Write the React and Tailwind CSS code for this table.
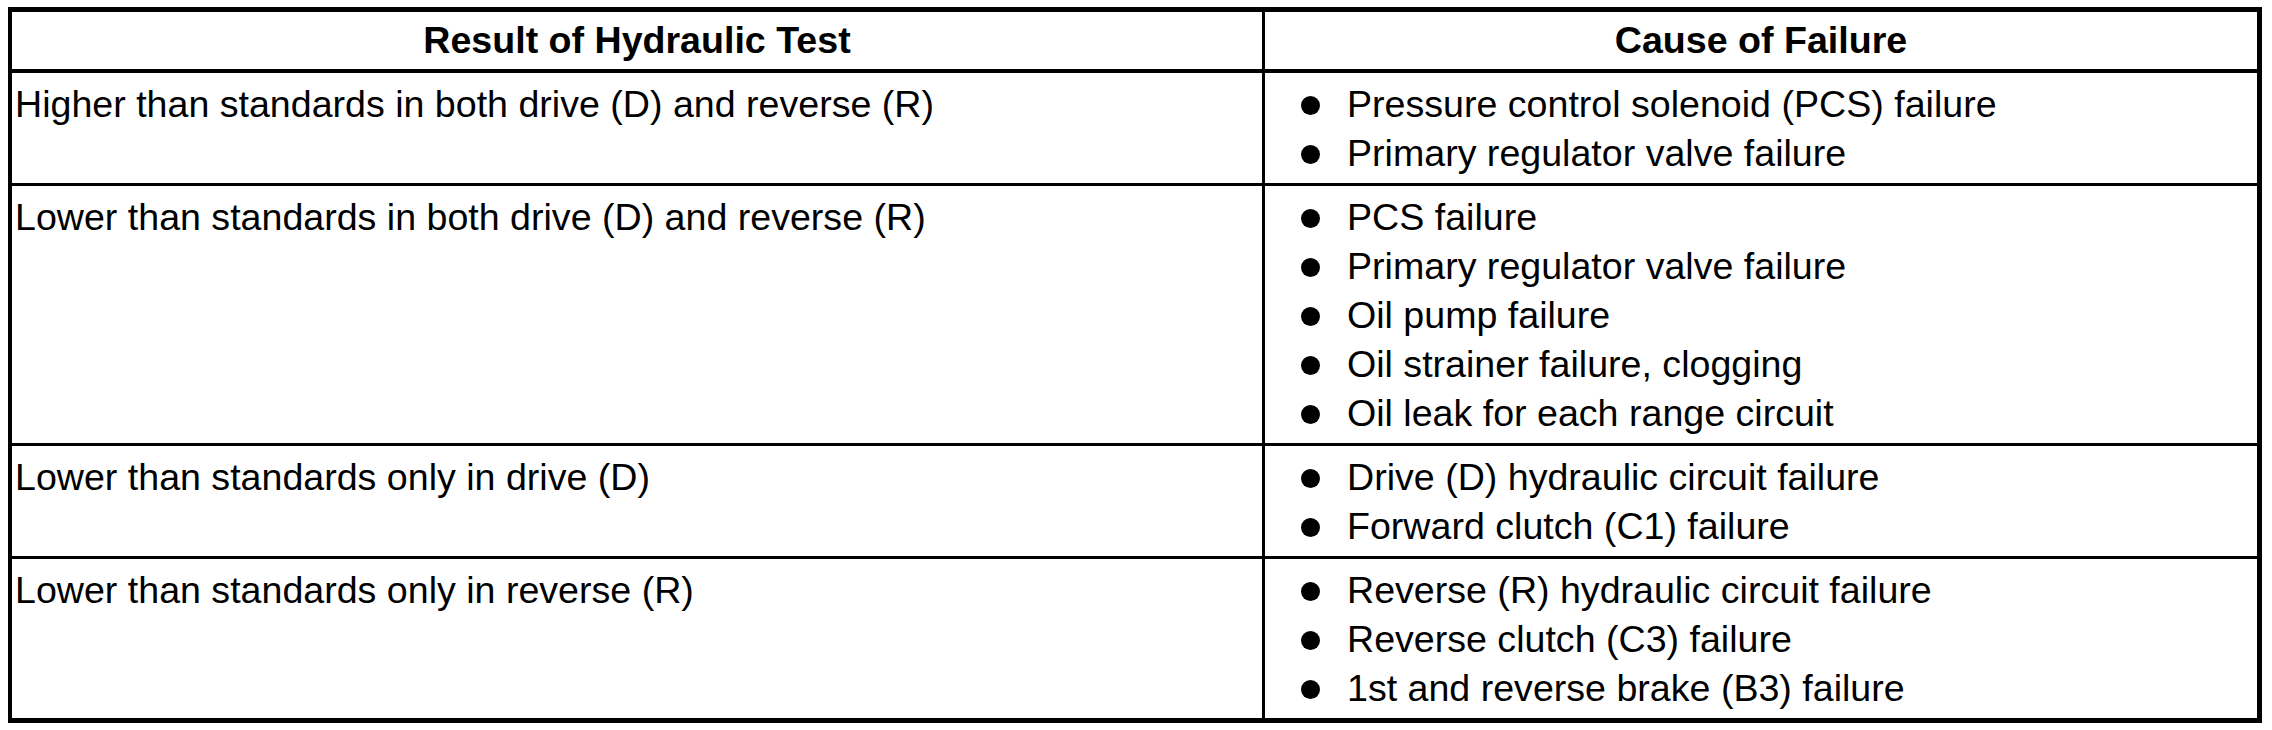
const ROWS = [
  {
    result: 'Higher than standards in both drive (D) and reverse (R)',
    causes: ['Pressure control solenoid (PCS) failure', 'Primary regulator valve failure'],
  },
  {
    result: 'Lower than standards in both drive (D) and reverse (R)',
    causes: [
      'PCS failure',
      'Primary regulator valve failure',
      'Oil pump failure',
      'Oil strainer failure, clogging',
      'Oil leak for each range circuit',
    ],
  },
  {
    result: 'Lower than standards only in drive (D)',
    causes: ['Drive (D) hydraulic circuit failure', 'Forward clutch (C1) failure'],
  },
  {
    result: 'Lower than standards only in reverse (R)',
    causes: [
      'Reverse (R) hydraulic circuit failure',
      'Reverse clutch (C3) failure',
      '1st and reverse brake (B3) failure',
    ],
  },
]

export default function App() {
  return (
    <div className="min-h-[730px] bg-white pl-[8px] pt-[7px] text-black font-['Liberation_Sans',Arial,sans-serif] text-[37.6px]">
      <div className="w-[2254px] border-t-[5px] border-l-[4px] border-r-[5px] border-b-[5px] border-black">
        {/* Header */}
        <div className="grid grid-cols-[1253px_992px] h-[61px] border-b-[4px] border-black font-bold">
          <div className="border-r-[3px] border-black flex items-center justify-center leading-none">
            Result of Hydraulic Test
          </div>
          <div className="flex items-center justify-center leading-none">Cause of Failure</div>
        </div>

        {/* Rows */}
        {ROWS.map((row, i) => (
          <div
            key={i}
            className={`grid grid-cols-[1253px_992px] ${i < ROWS.length - 1 ? 'border-b-[3px] border-black' : ''}`}
          >
            <div className="border-r-[3px] border-black pl-[3px] pt-[7px] pb-[5px] leading-[49px]">
              {row.result}
            </div>
            <ul className="pl-[36px] pt-[7px] pb-[5px]">
              {row.causes.map(c => (
                <li key={c} className="flex items-center h-[49px] leading-[49px]">
                  <span className="w-[19px] h-[19px] rounded-full bg-black shrink-0 translate-y-[1px] mr-[27px]" />
                  <span>{c}</span>
                </li>
              ))}
            </ul>
          </div>
        ))}
      </div>
    </div>
  )
}
